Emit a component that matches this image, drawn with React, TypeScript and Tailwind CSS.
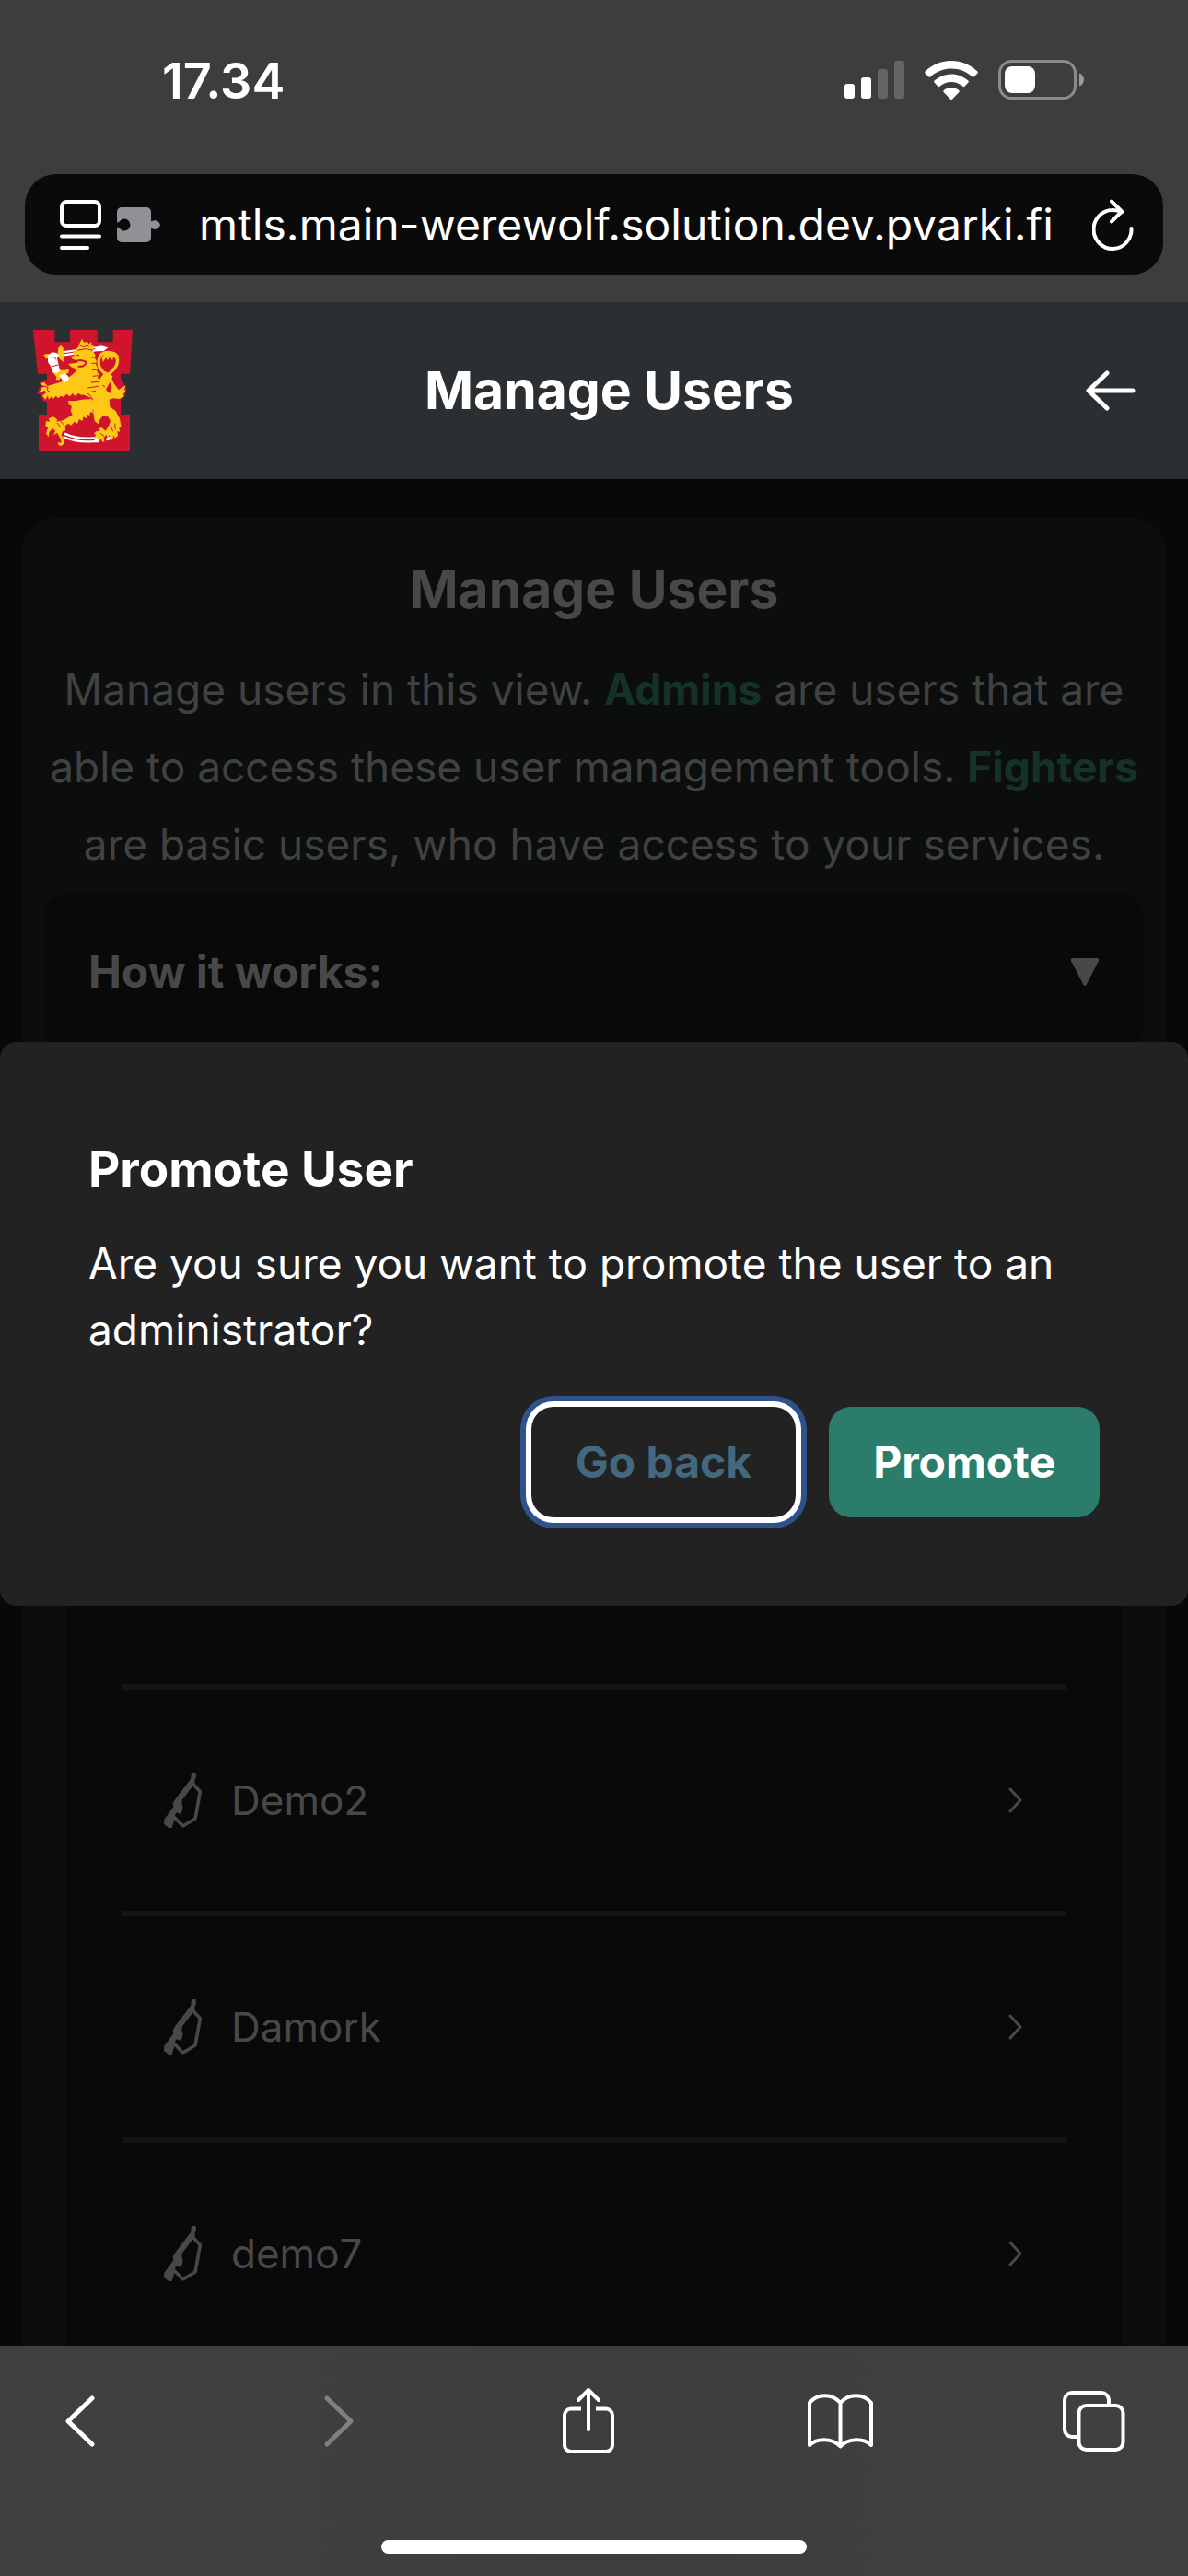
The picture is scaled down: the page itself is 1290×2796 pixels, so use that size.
import type { ReactNode } from "react";

function SignalIcon() {
  return (
    <svg width="65" height="42" viewBox="0 0 65 42" aria-label="Signal strength">
      <rect x="0" y="25" width="11" height="16" rx="3" fill="#fff" />
      <rect x="18" y="18" width="11" height="23" rx="3" fill="#fff" />
      <rect x="36" y="9" width="11" height="32" rx="3" fill="#646464" />
      <rect x="54" y="0" width="11" height="41" rx="3" fill="#646464" />
    </svg>
  );
}

function WifiIcon() {
  return (
    <svg width="58" height="42" viewBox="0 0 58 42" fill="#fff" aria-label="Wi-Fi">
      <path d="M29 0C18 0 8 4.300.7 11.500c-.7.700-.7 1.500 0 2.200l3.600 3.600c.7.700 1.500.7 2.200 0C12.500 11.700 20.300 8.500 29 8.500s16.500 3.200 22.500 8.800c.7.700 1.500.7 2.200 0l3.600-3.600c.7-.7.700-1.500 0-2.200C50 4.300 40 0 29 0z" />
      <path d="M29 14.500c-7 0-13.500 2.700-18.300 7.100-.7.700-.7 1.500 0 2.200l3.700 3.800c.6.700 1.500.7 2.200 0 3.400-3 7.700-4.700 12.400-4.700s9 1.700 12.400 4.700c.7.700 1.600.7 2.200 0l3.700-3.800c.7-.7.700-1.500 0-2.200-4.800-4.400-11.300-7.100-18.300-7.100z" />
      <path d="M29 29c-3.200 0-6 1.100-8.200 3-.7.700-.7 1.500 0 2.200l7.100 7.200c.6.700 1.600.7 2.200 0l7.100-7.200c.7-.7.700-1.500 0-2.200-2.200-1.900-5-3-8.200-3z" />
    </svg>
  );
}

function BatteryIcon() {
  return (
    <svg width="94" height="43" viewBox="0 0 94 43" aria-label="Battery">
      <rect x="1.500" y="1.500" width="82" height="40" rx="13" fill="none" stroke="#8b8b8b" strokeWidth="3" />
      <path d="M88 14.500c3 1 5 3.700 5 7s-2 6-5 7z" fill="#9b9b9b" />
      <rect x="7" y="7" width="33" height="29" rx="8" fill="#fff" />
    </svg>
  );
}

function ReaderIcon() {
  return (
    <svg width="46" height="54" viewBox="0 0 46 54" fill="none" stroke="#fff" strokeWidth="4" strokeLinecap="round">
      <rect x="2" y="2" width="41" height="26" rx="5" />
      <path d="M2 39.500h41M2 52h28" />
    </svg>
  );
}

function PuzzleIcon() {
  return (
    <svg width="47" height="38" viewBox="0 0 47 38" fill="#919097">
      <path d="M5 0h27a5 5 0 0 1 5 5v9c0 1.500 1 1.500 2 .6A6 6 0 0 1 47 19a6 6 0 0 1-8 4.600c-1-.9-2-.9-2 .6V33a5 5 0 0 1-5 5H5a5 5 0 0 1-5-5V23c0-1.500 1-2 2.200-.9A6.500 6.500 0 1 0 2.200 16C1 17 0 16.500 0 15V5a5 5 0 0 1 5-5z" />
    </svg>
  );
}

function ReloadIcon() {
  return (
    <svg width="45" height="56" viewBox="0 0 45 56" fill="none" stroke="#fff" strokeWidth="4" strokeLinecap="round" strokeLinejoin="round">
      <path d="M42.500 32a20.500 21 0 1 1-20.500-20c4 0 7 .6 10 2.200" />
      <path d="M21 2.500 32 13.500 21 24.500" />
    </svg>
  );
}

function Crest() {
  return (
    <svg width="108" height="132" viewBox="48 54 324 396" role="img" aria-label="Lion crest">
      {/* tower */}
      <path fill="#d0142c" d="M48 54h70v40h50V54h89v40h51V54h64l-9 143h-30v133h30v120H66V330h27V197H63z" />
      <g transform="translate(60 45)">
        <path fill="#d0142c" d="M33 170 8 176 12 190 1 216 14 222 20 240 36 244zM273 168l10 14 9 20-6 22-13 12zM33 296l-8 22 8 28z" />
        {/* upper and lower swords */}
        <path fill="#fff" d="M82 79 196 64l14-3 22 6-14 11-24 1L84 95z" />
        <path stroke="#d0142c" strokeWidth="3" d="M82 87 190 71" />
        <path d="M88 352c30 14 60 18 96 15h18" fill="none" stroke="#fff" strokeWidth="18" />
        <path d="M88 352c30 14 60 18 100 15" fill="none" stroke="#d0142c" strokeWidth="4" />
        <path fill="#fff" d="m228 360 14-5-5 13-12 2z" />
        {/* tail */}
        <path
          fill="none"
          stroke="#fdc816"
          strokeWidth="10"
          d="M212 182c8-20 20-26 34-40 22-20 26-58-14-60-36 0-38 44-18 62 14 12 26 22 32 40 6 18 8 28-4 46"
        />
        <path fill="#fdc816" d="M212 100c8-16 26-26 46-16l12 14-9-2 1 10-14-8-1 11-11-11-4 10-7-8-10 14zM224 144l-14 18-14 24 0 12 10-8 1 16 10-12 6 14 10-20 10-14 4-14zM250 182l16 22 24-14-6 14 6 6-9 8 4 8-16 8-20-2-14 4 4-22z" />
        {/* far hind leg */}
        <path
          fill="#fdc816"
          d="M102 240 124 241 148 236 178 234 192 250 190 272 182 268 182 280 174 276 172 288 164 284 162 298 152 292 148 306 138 300 132 314 122 308 112 320 102 314 92 322 94 336 84 340 80 352 86 364C90 376 88 384 80 386 70 388 66 378 72 374L78 378C82 374 78 366 74 358L66 344 54 352 60 338 52 330 40 342 38 358 30 346 36 328 28 322 30 306 42 308 38 298 54 292 68 302 62 308 86 304 116 286 110 272 114 258 104 252z"
        />
        {/* near foreleg */}
        <path
          fill="#fdc816"
          d="M132 136 124 148 102 166 82 178 62 184 34 192 24 180 10 184 16 188 28 194 18 196 6 214 16 212 24 206 32 212 18 224 28 236 36 222 38 236 48 226 54 234 62 224 70 232 78 224 88 228 96 218 108 226 116 216 126 226 134 216 148 222 170 200z"
        />
        {/* body and near hind leg */}
        <path
          fill="#fdc816"
          d="M138 150 200 170 214 190 228 208 246 222 236 236 238 260 256 272 270 298 275 328 268 326 270 342 262 338 264 354 254 362 251 352 246 368 240 366 237 352 230 360 226 350 218 362 220 374 212 372 209 362 202 374 198 360 188 364 192 350 186 348 192 340 206 338 200 330 212 328 224 338 234 322 240 306 232 292 214 290 206 300 200 316 188 306 184 280 184 246 176 230 150 220z"
        />
        {/* head, crown and mane */}
        <path
          fill="#fdc816"
          d="M134 66 140 52 147 38 153 50 166 48 168 56 178 48 178 60 187 62 181 76 191 92 188 99 195 112 191 119 199 134 195 141 202 156 198 163 206 178 202 186 207 200 198 208 140 200 118 156 124 148 140 136 126 136 112 130 102 120 120 118 132 116 130 108 116 104 110 96 122 94 118 84z"
        />
        <path
          fill="none"
          stroke="#d0142c"
          strokeWidth="3"
          d="M132 76 160 71 182 76M140 64l6-4 6 6 10-6 8 4M126 90l12 2M176 98l12 2M178 118l14 0M180 140l16-2M182 160l18-2M176 180l28-2M166 198l38-6M170 212l22-4M162 216c8 2 16 8 20 22M22 192l14 4-2 10 10 6M66 312l12 14M76 306l12 12M240 322l8 18M254 314l2 20M206 346l14 10M214 190l8 4"
        />
        <path fill="none" stroke="#d0142c" strokeWidth="6" d="M128 112c10-6 26-4 33 2-2 12-14 16-27 14" />
        {/* armoured arm */}
        <path fill="#fdc816" d="M22 90 38 86 40 100 30 104zM68 84 70 68 78 60 86 68 86 82 92 90 86 104 88 114 76 106 68 94zM52 148 64 140 94 140 104 136 104 148 90 156 80 160 74 172 62 172 64 162z" />
        <path fill="#fff" d="M38 90 50 82 64 84 72 92 66 102 72 128 76 142 64 150 50 146 46 128 36 114 36 100zM74 158 92 150 104 162 104 170 92 180 82 172 78 164z" />
        <path fill="none" stroke="#d0142c" strokeWidth="3" d="M40 98h18l4 8M50 128l20-5" />
      </g>
    </svg>
  );
}

function RifleIcon() {
  return (
    <svg width="41" height="60" viewBox="84 102 123 180" fill="none" stroke="#484848" strokeLinejoin="bevel">
      <path fill="#484848" stroke="none" d="M174 102h14l1 14-4 8-1 14-40 52-2 12 4 12-3 14-6 8-12-4-4 6-3 18-8 26h-10l-16-12 1-16 30-40-2-12 10-16 48-62z" />
      <path strokeWidth="11" d="m176 136 26 28-16 88-40 24-30-30" />
    </svg>
  );
}

function Chevron() {
  return (
    <svg width="15" height="28" viewBox="0 0 15 28" fill="none" stroke="#484848" strokeWidth="3" strokeLinecap="round" strokeLinejoin="round">
      <path d="m2 2 11 12L2 26" />
    </svg>
  );
}

function ToolButton({ label, children, disabled }: { label: string; children: ReactNode; disabled?: boolean }) {
  return (
    <button type="button" aria-label={label} disabled={disabled} className="flex h-18 w-18 items-center justify-center">
      {children}
    </button>
  );
}

const users = ["Demo2", "Damork", "demo7"];

export default function App() {
  return (
    <div className="flex h-screen flex-col overflow-hidden bg-[#080808] font-['Inter',sans-serif] text-white">
      <div className="bg-[#3d3d3d] pb-[30px]">
        <div className="flex h-[189px] items-start justify-between pr-[112px] pl-[176px]">
          <time className="pt-[58px] text-[54px] leading-[60px] font-semibold">17.34</time>
          <div className="flex items-center gap-[22px] pt-[65px]">
            <SignalIcon />
            <WifiIcon />
            <BatteryIcon />
          </div>
        </div>
        <div className="mx-[27px] flex h-[109px] items-center rounded-[34px] bg-[#0a0a0a] pr-8 pl-[38px]">
          <button type="button" aria-label="Page menu" className="flex items-center gap-4">
            <ReaderIcon />
            <PuzzleIcon />
          </button>
          <input
            aria-label="Address"
            readOnly
            value="mtls.main-werewolf.solution.dev.pvarki.fi"
            className="min-w-0 flex-1 bg-transparent px-1 text-center text-[48px] outline-none"
          />
          <button type="button" aria-label="Reload">
            <ReloadIcon />
          </button>
        </div>
      </div>

      <div className="relative flex min-h-0 flex-1 flex-col">
        <header className="flex h-48 shrink-0 items-center bg-[#2b2f32] pr-14 pl-9">
          <Crest />
          <div className="flex-1 text-center text-[57px] leading-[72px] font-bold">Manage Users</div>
          <button type="button" aria-label="Back">
            <svg width="55" height="44" viewBox="0 0 55 44" fill="none" stroke="#fff" strokeWidth="5" strokeLinecap="round" strokeLinejoin="round">
              <path d="M51 22H3M23 3 3 22l20 19" />
            </svg>
          </button>
        </header>

        <main className="min-h-0 flex-1 overflow-hidden px-6 pt-[42px] text-[#484848]">
          <section className="rounded-t-[36px] bg-[#0c0e0d] px-6 pt-10">
            <h1 className="text-center text-[57px] leading-[76px] font-bold">Manage Users</h1>
            <p className="mt-7 text-center text-[46px] leading-[84px] text-[#404141]">
              Manage users in this view. <strong className="font-bold text-[#14322a]">Admins</strong> are users that are able to
              access these user management tools. <strong className="font-bold text-[#14322a]">Fighters</strong> are basic users,
              who have access to your services.
            </p>
            <button
              type="button"
              aria-expanded="false"
              className="mt-3 flex h-[170px] w-full items-center justify-between rounded-[24px] bg-[#090909] px-12 text-[48px] font-bold"
            >
              How it works:
              <svg width="32" height="32" viewBox="0 0 32 32" fill="#484848">
                <path d="M3 1h26a2 2 0 0 1 2 3L17.500 30a2 2 0 0 1-3 0L1 4a2 2 0 0 1 2-3z" />
              </svg>
            </button>
            <ul className="mx-6 mt-6 bg-[#090909] px-15 pt-[664px]">
              {users.map((name) => (
                <li key={name} className="border-t-6 border-[#141414]">
                  <button type="button" className="flex h-60 w-full items-center pr-12 pl-[46px] text-left text-[44px]">
                    <RifleIcon />
                    <span className="ml-8 flex-1">{name}</span>
                    <Chevron />
                  </button>
                </li>
              ))}
            </ul>
          </section>
        </main>

        <div className="absolute inset-0 flex items-center">
          <div
            role="dialog"
            aria-modal="true"
            aria-labelledby="promote-title"
            className="w-full rounded-[18px] bg-[#222222] px-24 pt-24 pb-24"
          >
            <h2 id="promote-title" className="text-[53px] leading-[84px] font-bold">
              Promote User
            </h2>
            <p className="mt-6 text-[46px] leading-[72px]">Are you sure you want to promote the user to an administrator?</p>
            <div className="mt-12 flex justify-end gap-9">
              <button
                type="button"
                className="h-[120px] rounded-[24px] px-12 text-[48px] font-bold text-[#43687f] shadow-[0_0_0_6px_#ffffff,0_0_0_12px_#2d528c]"
              >
                Go back
              </button>
              <button type="button" className="h-[120px] rounded-[24px] bg-[#2c7c6b] px-12 text-[48px] font-bold">
                Promote
              </button>
            </div>
          </div>
        </div>
      </div>

      <nav aria-label="Browser toolbar" className="h-[250px] shrink-0 bg-linear-to-r from-[#3f4140] via-[#3d3d3d] to-[#3f4140]">
        <div className="flex items-center justify-between pt-[46px] pr-[66px] pl-[51px]">
          <ToolButton label="Previous page">
            <svg width="32" height="56" viewBox="0 0 32 56" fill="none" stroke="#fff" strokeWidth="5" strokeLinecap="round" strokeLinejoin="round">
              <path d="M29 3 3 28l26 25" />
            </svg>
          </ToolButton>
          <ToolButton label="Next page" disabled>
            <svg width="44" height="56" viewBox="-12 0 44 56" fill="none" stroke="#808080" strokeWidth="5" strokeLinecap="round" strokeLinejoin="round">
              <path d="m3 3 26 25L3 53" />
            </svg>
          </ToolButton>
          <ToolButton label="Share">
            <svg width="58" height="72" viewBox="-2 0 58 72" fill="none" stroke="#fff" strokeWidth="4" strokeLinejoin="round">
              <path d="M20 22.500H9a7 7 0 0 0-7 7V62a7 7 0 0 0 7 7h38a7 7 0 0 0 7-7V29.500a7 7 0 0 0-7-7H36" />
              <path strokeLinecap="round" d="M28 45V3M17 13 28 2l11 11" />
            </svg>
          </ToolButton>
          <ToolButton label="Bookmarks">
            <svg width="71" height="60" viewBox="0 0 71 60" fill="none" stroke="#fff" strokeWidth="4" strokeLinecap="round" strokeLinejoin="round">
              <path d="M35.500 10C27-.5 10-.5 2 10v46c8-8 25-8 33.500 1.500C44 48 61 48 69 56V10C61-.5 44-.5 35.500 10zM35.500 10v47" />
            </svg>
          </ToolButton>
          <ToolButton label="Tabs">
            <svg width="68" height="66" viewBox="0 0 68 66" fill="none" stroke="#fff" strokeWidth="4">
              <path d="M17 50h-7a8 8 0 0 1-8-8V10a8 8 0 0 1 8-8h32a8 8 0 0 1 8 8v5" />
              <rect x="17.500" y="16" width="48" height="48" rx="8" />
            </svg>
          </ToolButton>
        </div>
        <div className="mx-auto mt-[93px] h-[15px] w-[462px] rounded-full bg-white" />
      </nav>
    </div>
  );
}
